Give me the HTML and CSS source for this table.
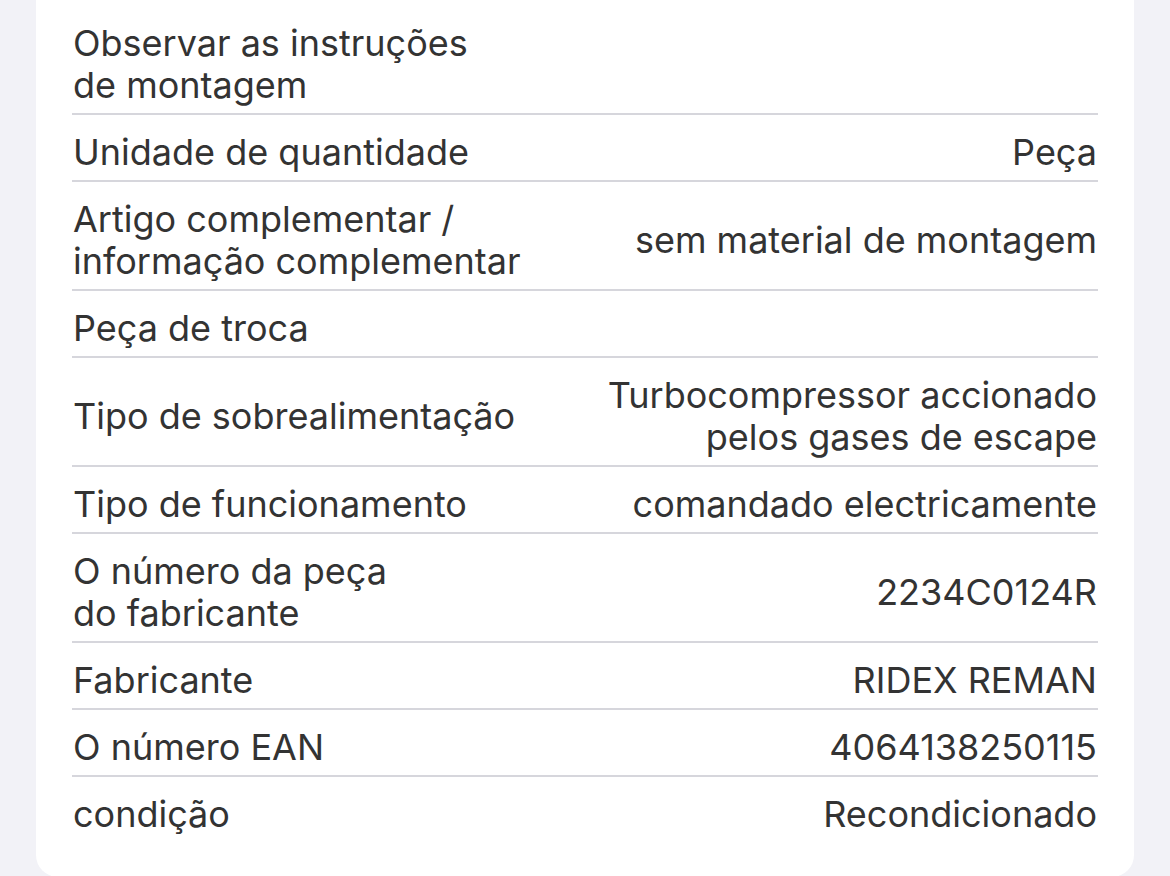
FILE: index.html
```html
<!DOCTYPE html>
<html lang="pt">
<head>
<meta charset="utf-8">
<link rel="stylesheet" href="styles.css">
</head>
<body>
<div class="page">
  <div class="card">
    <div class="row"><div class="label">Observar as instruções<br>de montagem</div><div class="value"></div></div>
    <div class="row"><div class="label">Unidade de quantidade</div><div class="value">Peça</div></div>
    <div class="row"><div class="label">Artigo complementar /<br>informação complementar</div><div class="value">sem material de montagem</div></div>
    <div class="row"><div class="label">Peça de troca</div><div class="value"></div></div>
    <div class="row"><div class="label">Tipo de sobrealimentação</div><div class="value">Turbocompressor accionado<br>pelos gases de escape</div></div>
    <div class="row"><div class="label">Tipo de funcionamento</div><div class="value">comandado electricamente</div></div>
    <div class="row"><div class="label">O número da peça<br>do fabricante</div><div class="value">2234C0124R</div></div>
    <div class="row"><div class="label">Fabricante</div><div class="value">RIDEX REMAN</div></div>
    <div class="row"><div class="label">O número EAN</div><div class="value">4064138250115</div></div>
    <div class="row last"><div class="label">condição</div><div class="value">Recondicionado</div></div>
  </div>
</div>
</body>
</html>
```
FILE: styles.css
```css
html, body {
  margin: 0;
  padding: 0;
  background: #f2f2f7;
}
body {
  width: 1170px;
  height: 876px;
  overflow: hidden;
  font-family: Inter, "Noto Sans", sans-serif;
  color: #333333;
}
.page {
  padding: 0 36px;
}
.card {
  background: #ffffff;
  border-radius: 0 0 22px 22px;
  padding: 6px 36px 35px 36px;
}
.row {
  display: flex;
  align-items: center;
  justify-content: space-between;
  gap: 40px;
  padding: 16px 0 7px 1px;
  border-bottom: 2px solid #d6d6dc;
  font-size: 36px;
  line-height: 42px;
}
.row.last {
  border-bottom: none;
}
.label {
  text-align: left;
}
.value {
  text-align: right;
  padding-right: 1px;
}
```
